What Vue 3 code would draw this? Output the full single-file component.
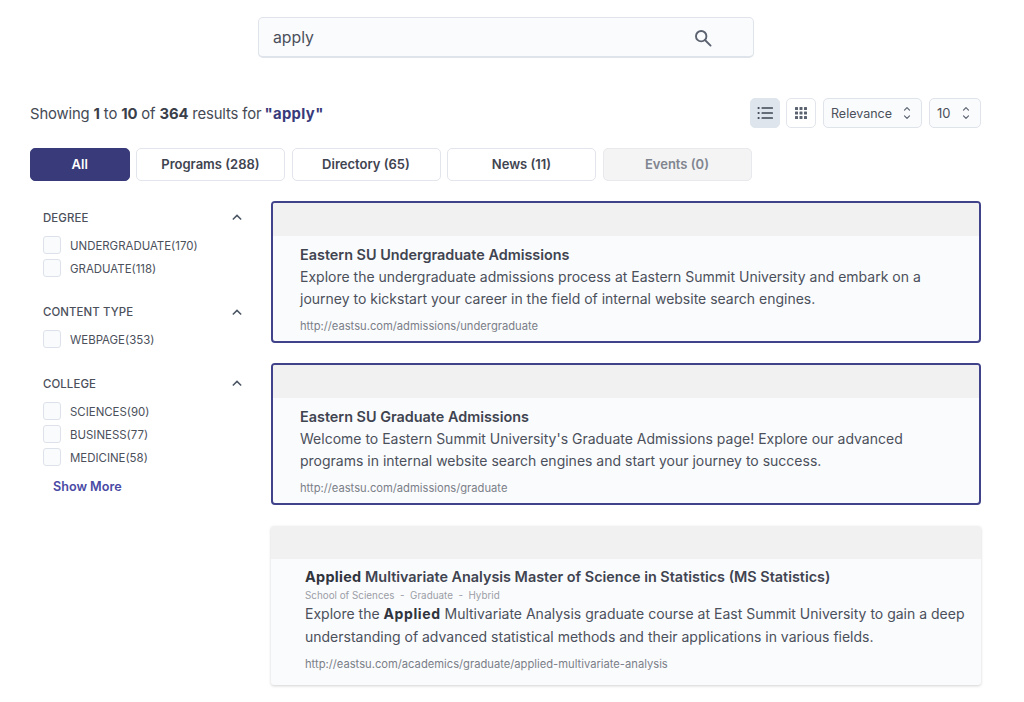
<script setup>
const tabs = [
  { label: 'All', cls: 'active' },
  { label: 'Programs (288)', cls: '' },
  { label: 'Directory (65)', cls: '' },
  { label: 'News (11)', cls: '' },
  { label: 'Events (0)', cls: 'disabled' },
]
const facets = [
  { title: 'DEGREE', items: ['UNDERGRADUATE(170)', 'GRADUATE(118)'] },
  { title: 'CONTENT TYPE', items: ['WEBPAGE(353)'] },
  { title: 'COLLEGE', items: ['SCIENCES(90)', 'BUSINESS(77)', 'MEDICINE(58)'], more: true },
]
</script>

<template>
  <div class="page">
    <div class="search-wrap">
      <div class="search">
        <span class="query">apply</span>
        <svg class="search-icon" viewBox="0 0 20 20" fill="none" stroke="currentColor" stroke-width="2.1">
          <circle cx="8" cy="8" r="5.8" />
          <path d="M12.2 12.2 18.4 18.4" stroke-linecap="round" />
        </svg>
      </div>
    </div>

    <div class="summary-row">
      <p class="summary">
        Showing <b>1</b> to <b>10</b> of <b>364</b> results for <b class="term">"apply"</b>
      </p>
      <div class="controls">
        <button class="view on">
          <svg viewBox="0 0 16 16" width="16" height="16" fill="#3c4552">
            <circle cx="1.6" cy="3" r="1.1" /><circle cx="1.6" cy="8" r="1.1" /><circle cx="1.6" cy="13" r="1.1" />
            <rect x="4.5" y="2.2" width="11.5" height="1.6" rx=".6" />
            <rect x="4.5" y="7.2" width="11.5" height="1.6" rx=".6" />
            <rect x="4.5" y="12.2" width="11.5" height="1.6" rx=".6" />
          </svg>
        </button>
        <button class="view">
          <svg viewBox="0 0 14 14" width="14" height="14" fill="#5b6270">
            <template v-for="y in [1, 5.5, 10]" :key="y">
              <rect v-for="x in [1, 5.5, 10]" :key="x" :x="x" :y="y" width="3" height="3" rx=".5" />
            </template>
          </svg>
        </button>
        <div class="select rel">
          <span>Relevance</span>
          <svg class="updown" viewBox="0 0 10 16" width="10" height="16" fill="none" stroke="#5b6270" stroke-width="1.2">
            <path d="M2.5 5.2 5 2.7 7.5 5.2M2.5 10.8 5 13.3 7.5 10.8" stroke-linecap="round" stroke-linejoin="round" />
          </svg>
        </div>
        <div class="select num">
          <span>10</span>
          <svg class="updown" viewBox="0 0 10 16" width="10" height="16" fill="none" stroke="#5b6270" stroke-width="1.2">
            <path d="M2.5 5.2 5 2.7 7.5 5.2M2.5 10.8 5 13.3 7.5 10.8" stroke-linecap="round" stroke-linejoin="round" />
          </svg>
        </div>
      </div>
    </div>

    <nav class="tabs">
      <button v-for="t in tabs" :key="t.label" class="tab" :class="t.cls">{{ t.label }}</button>
    </nav>

    <div class="body">
      <aside class="side">
        <section v-for="f in facets" :key="f.title" class="facet">
          <header class="facet-head">
            <span>{{ f.title }}</span>
            <svg viewBox="0 0 12 8" width="10" height="7" fill="none" stroke="#4b5563" stroke-width="1.8">
              <path d="M1 6.5 6 1.5 11 6.5" />
            </svg>
          </header>
          <label v-for="i in f.items" :key="i" class="opt">
            <span class="box"></span>
            <span class="opt-text">{{ i }}</span>
          </label>
          <a v-if="f.more" class="more">Show More</a>
        </section>
      </aside>

      <main class="results">
        <article class="card selected">
          <div class="strip"></div>
          <div class="content">
            <h3>Eastern SU Undergraduate Admissions</h3>
            <p class="desc">Explore the undergraduate admissions process at Eastern Summit University and embark on a journey to kickstart your career in the field of internal website search engines.</p>
            <p class="url">http://eastsu.com/admissions/undergraduate</p>
          </div>
        </article>

        <article class="card selected">
          <div class="strip"></div>
          <div class="content">
            <h3>Eastern SU Graduate Admissions</h3>
            <p class="desc">Welcome to Eastern Summit University's Graduate Admissions page! Explore our advanced programs in internal website search engines and start your journey to success.</p>
            <p class="url">http://eastsu.com/admissions/graduate</p>
          </div>
        </article>

        <article class="card plain">
          <div class="strip"></div>
          <div class="content wide">
            <h3><b>Applied</b> Multivariate Analysis Master of Science in Statistics (MS Statistics)</h3>
            <p class="meta">School of Sciences &nbsp;-&nbsp; Graduate &nbsp;-&nbsp; Hybrid</p>
            <p class="desc">Explore the <b>Applied</b> Multivariate Analysis graduate course at East Summit University to gain a deep understanding of advanced statistical methods and their applications in various fields.</p>
            <p class="url">http://eastsu.com/academics/graduate/applied-multivariate-analysis</p>
          </div>
        </article>
      </main>
    </div>
  </div>
</template>

<style scoped>
* { box-sizing: border-box; }
.page {
  width: 1024px;
  height: 702px;
  overflow: hidden;
  padding: 17px 43px 0 30px;
  background: #fff;
  font-family: Inter, "Liberation Sans", sans-serif;
  color: #3f4450;
}
.search-wrap { display: flex; padding-left: 228px; }
.search {
  width: 496px;
  height: 41px;
  display: flex;
  align-items: center;
  justify-content: space-between;
  padding: 1px 41px 0 14px;
  background: #fafbfd;
  border: 1px solid #dfe3ea;
  border-bottom-width: 2px;
  border-radius: 5px;
}
.query { font-size: 15.8px; color: #4b505b; }
.search-icon { width: 18px; height: 18px; color: #5b6270; }
.summary-row {
  margin-top: 40px;
  height: 30px;
  display: flex;
  align-items: center;
  justify-content: space-between;
}
.summary { margin: 0; padding-top: 1px; font-size: 14.85px; color: #454a55; letter-spacing: -0.01em; }
.summary b { font-weight: 700; color: #3a3f4a; }
.summary .term { margin-left: -1px; letter-spacing: .35px; color: #393a7a; }
.controls { display: flex; gap: 6px; }
.view {
  width: 30px;
  height: 30px;
  padding: 0;
  display: flex;
  align-items: center;
  justify-content: center;
  background: #fff;
  border: 1px solid #e2e6ec;
  border-radius: 5px;
}
.view.on { background: #dfe5ed; border-color: #dfe5ed; }
.view:not(.on) { margin-right: 1px; }
.select {
  height: 30px;
  display: flex;
  align-items: center;
  justify-content: space-between;
  background: #fafbfd;
  border: 1px solid #dfe3ea;
  border-radius: 5px;
  font-size: 12.5px;
  color: #4b505b;
}
.select.rel { width: 99px; padding: 0 9px 0 7px; }
.select.num { width: 52px; margin-left: 1px; padding: 0 9px 0 7px; font-size: 13px; }
.tabs { margin-top: 20px; display: flex; gap: 6.5px; }
.tab {
  width: 149px;
  height: 33px;
  padding: 0 0 2px;
  background: #fff;
  border: 1px solid #e2e5eb;
  border-radius: 5px;
  font-family: inherit;
  font-size: 13px;
  font-weight: 600;
  color: #3f4450;
}
.tab.active { width: 99.5px; background: #393a7a; border-color: #393a7a; color: #fff; }
.tab.disabled { background: #f4f4f5; color: #80858f; border-color: #e8e9ec; }
.body { display: flex; margin-top: 20px; }
.side { width: 241px; flex: none; padding-left: 13px; padding-right: 29px; }
.facet { margin-bottom: 16.5px; }
.facet-head {
  height: 32px;
  padding-top: 1px;
  display: flex;
  align-items: center;
  justify-content: space-between;
  font-size: 11.4px;
  font-weight: 500;
  letter-spacing: .01em;
  color: #4b505b;
}
.opt {
  display: flex;
  align-items: center;
  gap: 9.5px;
  height: 23px;
  font-size: 11.45px;
  color: #4b505b;
}
.opt-text { padding-top: 2px; }
.box {
  width: 18px;
  height: 18px;
  flex: none;
  margin-left: -0.5px;
  background: #fafbfd;
  border: 1px solid #dde2ea;
  border-radius: 3px;
}
.more {
  display: block;
  margin: 9px 0 0 10px;
  font-size: 12.6px;
  font-weight: 600;
  line-height: 20px;
  color: #4a4aa5;
}
.results { flex: 1; display: flex; flex-direction: column; gap: 20px; }
.card { background: #fafbfd; border-radius: 3px; overflow: hidden; }
.card.selected { height: 142px; border: 2px solid #40428a; border-radius: 4px; }
.card.plain { height: 159px; margin-top: 1px; box-shadow: 0 1px 3px rgba(0, 0, 0, .18); }
.strip { height: 33px; background: #f1f1f1; }
.content { padding: 9px 27px 0 27px; }
.content.wide { padding: 8px 10px 0 34px; }
h3 {
  margin: 0 0 1px;
  font-size: 14.4px;
  line-height: 20px;
  font-weight: 600;
  color: #3f4450;
}
h3 b { letter-spacing: .3px; font-weight: 700; color: #30343d; }
.meta { margin: 0; font-size: 9.85px; line-height: 15px; color: #9a9ea6; }
.desc { margin: 0; font-size: 14px; line-height: 22.2px; color: #4b505b; }
.desc b { letter-spacing: .6px; font-weight: 700; color: #30343d; }
.content.wide .desc { line-height: 22.6px; }
.url { margin: 7.5px 0 0; font-size: 11.2px; line-height: 16px; color: #7b7f88; }
</style>
